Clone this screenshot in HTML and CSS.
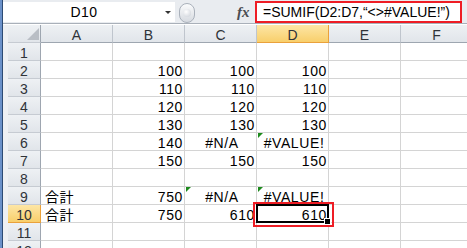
FILE: index.html
```html
<!DOCTYPE html>
<html lang="ja">
<head>
  <meta charset="UTF-8">
  <title>SUMIF</title>
  <link rel="stylesheet" href="styles.css">
</head>
<body>

<div class="app">
  <div class="edge"></div>
  <div class="main">
    <div class="fbar">
      <div class="namebox">
        <span class="name">D10</span>
        <span class="drop"></span>
      </div>
      <div class="grip"><span></span></div>
      <div class="fx">fx</div>
      <div class="formula">=SUMIF(D2:D7,“&lt;&gt;#VALUE!”)</div>
    </div>

    <div class="sheet">
      <div class="row">
        <div class="rh corner">
          <svg width="12" height="12" viewBox="0 0 12 12"><polygon points="12,0 12,12 0,12" fill="#b9bec5"/></svg>
        </div>
        <div class="ch">A</div>
        <div class="ch">B</div>
        <div class="ch">C</div>
        <div class="ch sel">D</div>
        <div class="ch">E</div>
        <div class="ch">F</div>
      </div>
      <div class="row">
        <div class="rh">1</div>
        <div class="cell"></div><div class="cell"></div><div class="cell"></div>
        <div class="cell"></div><div class="cell"></div><div class="cell"></div>
      </div>
      <div class="row">
        <div class="rh">2</div>
        <div class="cell"></div><div class="cell num">100</div><div class="cell num">100</div>
        <div class="cell num">100</div><div class="cell"></div><div class="cell"></div>
      </div>
      <div class="row">
        <div class="rh">3</div>
        <div class="cell"></div><div class="cell num">110</div><div class="cell num">110</div>
        <div class="cell num">110</div><div class="cell"></div><div class="cell"></div>
      </div>
      <div class="row">
        <div class="rh">4</div>
        <div class="cell"></div><div class="cell num">120</div><div class="cell num">120</div>
        <div class="cell num">120</div><div class="cell"></div><div class="cell"></div>
      </div>
      <div class="row">
        <div class="rh">5</div>
        <div class="cell"></div><div class="cell num">130</div><div class="cell num">130</div>
        <div class="cell num">130</div><div class="cell"></div><div class="cell"></div>
      </div>
      <div class="row">
        <div class="rh">6</div>
        <div class="cell"></div><div class="cell num">140</div><div class="cell err">#N/A</div>
        <div class="cell err flag">#VALUE!</div><div class="cell"></div><div class="cell"></div>
      </div>
      <div class="row">
        <div class="rh">7</div>
        <div class="cell"></div><div class="cell num">150</div><div class="cell num">150</div>
        <div class="cell num">150</div><div class="cell"></div><div class="cell"></div>
      </div>
      <div class="row">
        <div class="rh">8</div>
        <div class="cell"></div><div class="cell"></div><div class="cell"></div>
        <div class="cell"></div><div class="cell"></div><div class="cell"></div>
      </div>
      <div class="row">
        <div class="rh">9</div>
        <div class="cell">合計</div><div class="cell num">750</div><div class="cell err flag">#N/A</div>
        <div class="cell err flag">#VALUE!</div><div class="cell"></div><div class="cell"></div>
      </div>
      <div class="row">
        <div class="rh sel">10</div>
        <div class="cell">合計</div><div class="cell num">750</div><div class="cell num">610</div>
        <div class="cell num active">610<span class="handle"></span><span class="mark"></span></div>
        <div class="cell"></div><div class="cell"></div>
      </div>
      <div class="row">
        <div class="rh">11</div>
        <div class="cell"></div><div class="cell"></div><div class="cell"></div>
        <div class="cell"></div><div class="cell"></div><div class="cell"></div>
      </div>
      <div class="row">
        <div class="rh">12</div>
        <div class="cell"></div><div class="cell"></div><div class="cell"></div>
        <div class="cell"></div><div class="cell"></div><div class="cell"></div>
      </div>
    </div>
  </div>
</div>

</body>
</html>
```

FILE: styles.css
```css
body {
  margin: 0;
  font-family: "Liberation Sans", Arial, "Noto Sans CJK JP", sans-serif;
  font-size: 14px;
  color: #000;
  background: #fff;
  overflow: hidden;
}
.app {
  display: flex;
  width: 467px;
  height: 248px;
  overflow: hidden;
}
.edge {
  width: 3px;
  flex: none;
  background: linear-gradient(to right, #6b91c9 0 2px, #2d4b74 2px 3px);
}
.main {
  flex: 1;
  min-width: 0;
}

/* formula bar */
.fbar {
  height: 23px;
  display: flex;
  align-items: flex-start;
  background: #e9ecf0;
  border-bottom: 1px solid #a9b0b9;
}
.namebox {
  width: 172px;
  height: 20px;
  margin-top: 2px;
  background: #fff;
  display: flex;
  align-items: center;
  flex: none;
}
.name {
  flex: 1;
  text-align: center;
  line-height: 20px;
  letter-spacing: 0.5px;
}
.drop {
  width: 0;
  height: 0;
  margin: 0 4px 0 0;
  border-left: 3px solid transparent;
  border-right: 3px solid transparent;
  border-top: 3px solid #333;
}
.grip {
  width: 14px;
  height: 18px;
  margin: 3px 0 0 4px;
  border: 1px solid #aab1bb;
  border-radius: 10px;
  background: linear-gradient(#fafbfc, #d6dae0);
  display: flex;
  align-items: center;
  justify-content: center;
  flex: none;
}
.grip span {
  width: 8px;
  height: 8px;
  border-radius: 50%;
  background: radial-gradient(circle at 40% 35%, #ffffff, #c9ced6);
}
.fx {
  margin: 2px 0 0 42px;
  width: 14px;
  line-height: 20px;
  font-family: "Liberation Serif", "Times New Roman", serif;
  font-style: italic;
  font-weight: bold;
  font-size: 15px;
  color: #4a4d52;
  flex: none;
}
.formula {
  margin: 1px 0 0 4px;
  width: 207px;
  height: 22px;
  box-sizing: border-box;
  border: 2px solid #ee1d25;
  background: #fff;
  padding-left: 6px;
  line-height: 18px;
  white-space: nowrap;
  flex: none;
}

/* sheet grid */
.sheet {
  border-top: 1px solid #fff;
  padding-left: 5px;
  background: #eef0f3;
}
.row {
  display: flex;
  height: 18px;
}
.row > div {
  flex: none;
  height: 18px;
  box-sizing: border-box;
  position: relative;
  white-space: nowrap;
  line-height: 15px;
  padding-top: 3px;
}
.cell {
  width: 72px;
  background: #fff;
  border-right: 1px solid #d4d4d4;
  border-bottom: 1px solid #d4d4d4;
  padding: 0 1px 0 4px;
  letter-spacing: 0.6px;
}
.num {
  text-align: right;
}
.err {
  text-align: center;
}
.flag::before {
  content: "";
  position: absolute;
  left: 1px;
  top: 0;
  border-top: 5px solid #1d8a1d;
  border-right: 5px solid transparent;
}
.ch, .rh {
  background: linear-gradient(#eef1f4, #e1e5ea);
  color: #2f3338;
  text-align: center;
  border-right: 1px solid #bfc5cd;
  border-bottom: 1px solid #c6cbd2;
}
.ch {
  width: 72px;
  border-bottom-color: #9ea6b0;
}
.rh {
  width: 33px;
  border-right-color: #9ea6b0;
}
.corner {
  display: flex;
  align-items: flex-end;
  justify-content: flex-end;
  padding: 0 1px 2px 0;
}
.corner svg {
  display: block;
}
.sel {
  background: linear-gradient(#fde6a6, #f8cf6b);
  border-right-color: #eaa13b;
  border-bottom-color: #eaa13b;
}

/* active cell */
.active::after {
  content: "";
  position: absolute;
  left: -1px;
  top: -1px;
  right: -1px;
  bottom: -1px;
  border: 2px solid #000;
}
.handle {
  position: absolute;
  right: -3px;
  bottom: -3px;
  width: 5px;
  height: 5px;
  background: #000;
  border: 1px solid #fff;
  z-index: 2;
}
.mark {
  position: absolute;
  left: -4px;
  top: -3px;
  right: -6px;
  bottom: -5px;
  border: 2px solid #ee1d25;
  z-index: 3;
}
```
